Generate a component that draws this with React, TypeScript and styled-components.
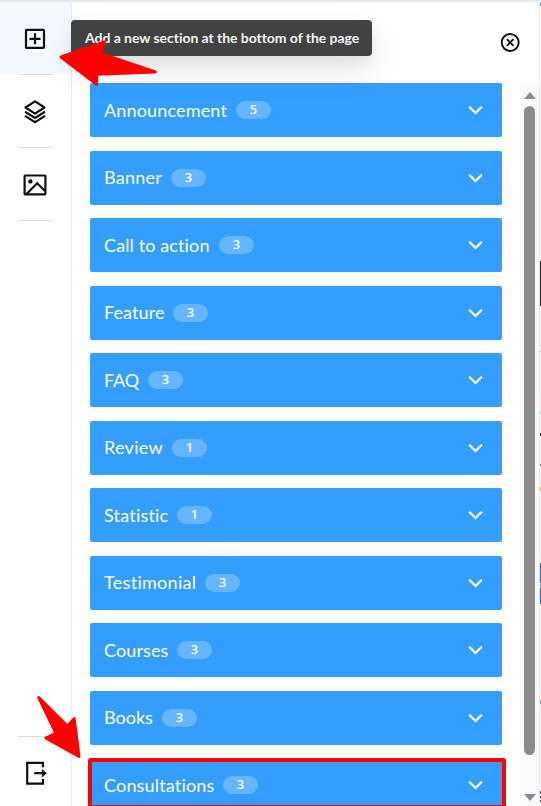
import React from 'react';
import styled, { createGlobalStyle } from 'styled-components';

const GlobalStyle = createGlobalStyle`
  *, *::before, *::after { box-sizing: border-box; }
  html, body { margin: 0; overflow: hidden; background: #fff; }
`;

const Editor = styled.div`
  position: relative;
  display: flex;
  width: 541px;
  height: 806px;
  overflow: hidden;
  background: #fff;
  font-family: Lato, "Noto Sans", sans-serif;
  font-variant-ligatures: none;
  &::before {
    content: "";
    position: absolute;
    z-index: 1;
    inset: 0 0 auto 0;
    height: 3px;
    background: linear-gradient(#e3e3e3, #ededed 50%, rgba(245, 245, 245, 0.4));
  }
`;

const Rail = styled.nav`
  display: flex;
  flex-direction: column;
  flex: none;
  width: 72px;
  border-right: 1px solid #ebebed;
`;

const RailButton = styled.button<{ $active?: boolean; $height: number }>`
  display: flex;
  align-items: center;
  justify-content: center;
  width: 71px;
  height: ${p => p.$height}px;
  padding: ${p => (p.$active ? 4 : 2)}px 1px 0 0;
  border: 0;
  background: ${p => (p.$active ? '#f3f9fe' : 'transparent')};
  svg { display: block; }
`;

const Divider = styled.div`
  flex: none;
  width: 35px;
  height: 1px;
  margin-left: 18px;
  background: #dedee0;
`;

const Spacer = styled.div`
  flex: 1;
`;

const Panel = styled.section`
  display: flex;
  flex-direction: column;
  width: 467px;
  min-width: 0;
`;

const PanelHeader = styled.header`
  display: flex;
  flex: none;
  align-items: flex-start;
  justify-content: flex-end;
  height: 83px;
  padding: 32px 19px 0 0;
  svg { display: block; }
`;

const PanelBody = styled.div`
  display: flex;
  flex: 1;
  min-height: 0;
  justify-content: space-between;
`;

const SectionList = styled.div`
  display: flex;
  flex-direction: column;
  gap: 13.5px;
  padding: 0.3px 0 0 18px;
`;

const SectionRow = styled.div<{ $marked?: boolean }>`
  position: relative;
  display: flex;
  flex: none;
  align-items: center;
  width: 412px;
  height: 54px;
  padding: 0 19px 0 14px;
  border-radius: 2px;
  background: #349eff;
  color: #fff;
  ${p => p.$marked && `
    &::after {
      content: "";
      position: absolute;
      top: -0.3px;
      left: -2px;
      width: 418px;
      height: 51px;
      border: 4px solid #fe0000;
      border-radius: 3px;
    }
  `}
`;

const Label = styled.span<{ $width: number; $spacing: number }>`
  flex: none;
  width: ${p => p.$width}px;
  padding-bottom: 1px;
  font-size: 18px;
  line-height: 24px;
  letter-spacing: ${p => p.$spacing}px;
  white-space: nowrap;
`;

const Count = styled.span`
  width: 35px;
  height: 18px;
  border-radius: 9px;
  background: #66b5ff;
  font-family: "Noto Sans", sans-serif;
  font-size: 13px;
  font-weight: 500;
  line-height: 17px;
  text-align: center;
`;

const Chevron = styled.svg`
  display: block;
  margin-left: auto;
`;

const Scrollbar = styled.div`
  display: flex;
  flex-direction: column;
  align-items: center;
  width: 19px;
  padding: 9px 0 5px;
  background: #fbfbfb;
`;

const ScrollArrow = styled.div<{ $down?: boolean }>`
  width: 0;
  height: 0;
  border-left: 6.5px solid transparent;
  border-right: 6.5px solid transparent;
  ${p => (p.$down ? 'border-top' : 'border-bottom')}: 7px solid #8b8b8b;
`;

const Thumb = styled.div`
  width: 11px;
  height: 649px;
  margin: 7px 0 auto;
  border-radius: 6px;
  background: #8b8b8b;
`;

const PageEdge = styled.div`
  display: flex;
  flex-direction: column;
  width: 2px;
  border-left: 1px solid #e9e9eb;
`;

const EdgePiece = styled.div<{ $gap: number; $height: number; $color: string }>`
  flex: none;
  height: ${p => p.$height}px;
  margin-top: ${p => p.$gap}px;
  background: ${p => p.$color};
`;

const Tooltip = styled.div`
  position: absolute;
  top: 20px;
  left: 71px;
  width: 301px;
  height: 36px;
  padding-left: 14px;
  border-radius: 4px;
  background: #424242;
  box-shadow: 0 8px 12px rgba(0, 0, 0, 0.05), 0 14px 34px rgba(0, 0, 0, 0.1);
  color: #f5f5f5;
  font-size: 14px;
  font-weight: 700;
  line-height: 35px;
  letter-spacing: -0.05px;
  white-space: nowrap;
`;

const Arrows = styled.svg`
  position: absolute;
  inset: 0;
  pointer-events: none;
`;

const sections = [
  { name: 'Announcement', count: 5, width: 132, spacing: 0.16 },
  { name: 'Banner', count: 3, width: 67, spacing: 0.23 },
  { name: 'Call to action', count: 3, width: 115, spacing: 0.12 },
  { name: 'Feature', count: 3, width: 69, spacing: 0.09 },
  { name: 'FAQ', count: 3, width: 44, spacing: -0.1 },
  { name: 'Review', count: 1, width: 68, spacing: 0.3 },
  { name: 'Statistic', count: 1, width: 73, spacing: 0.2 },
  { name: 'Testimonial', count: 3, width: 101, spacing: 0.3 },
  { name: 'Courses', count: 3, width: 73, spacing: 0.11 },
  { name: 'Books', count: 3, width: 58, spacing: 0 },
  { name: 'Consultations', count: 3, width: 119, spacing: 0.17, marked: true },
];

const edgePieces = [
  { gap: 2, height: 4, color: '#349eff' },
  { gap: 255, height: 45, color: '#20262e' },
  { gap: 45, height: 1, color: '#b5b5b5' },
  { gap: 60, height: 2, color: '#9cd6f2' },
  { gap: 19, height: 3, color: '#20202a' },
  { gap: 28, height: 2, color: '#68718a' },
  { gap: 21, height: 4, color: '#d7a46a' },
  { gap: 72, height: 20, color: '#2f62e0' },
  { gap: 1, height: 3, color: '#7fa6e0' },
  { gap: 1, height: 16, color: '#2f62e0' },
  { gap: 96, height: 4, color: '#4daaf7' },
  { gap: 87, height: 3, color: '#35557a' },
  { gap: 2, height: 2, color: '#4a5263' },
  { gap: 2, height: 2, color: '#4a5263' },
];

const ink = '#111';

const AddIcon = () => (
  <svg width="24" height="24" viewBox="0 0 24 24" fill="none" stroke={ink} strokeWidth="2.2">
    <rect x="3" y="2.8" width="18" height="18" rx=".6" />
    <path d="M12 6.3v11M6.5 11.8h11" />
  </svg>
);

const LayersIcon = () => (
  <svg width="24" height="26" viewBox="0 0 24 26" fill="none" stroke={ink} strokeWidth="2.2">
    <path d="M12 2.4 21.5 8.5 12 14.6 2.5 8.5Z" strokeLinejoin="round" />
    <path d="m2 12.7 10 6.3 10-6.3M2 16.9l10 6.3 10-6.3" />
  </svg>
);

const ImageIcon = () => (
  <svg width="24" height="24" viewBox="0 0 24 24" fill="none" stroke={ink} strokeWidth="2.2">
    <rect x="1.6" y="2.5" width="20.8" height="18.8" rx=".5" />
    <circle cx="7.4" cy="8.4" r="2.2" fill={ink} stroke="none" />
    <path d="m3.5 21 10.7-10.7L22 18" />
  </svg>
);

const ExitIcon = () => (
  <svg width="24" height="24" viewBox="0 0 24 24" fill="none" stroke={ink} strokeWidth="2.2">
    <path d="M20 6.2V1.8H4.2v20.8H20V18M11.2 12.2h9" />
    <path d="m18.8 8 5 4.2-5 4.2Z" fill={ink} stroke="none" />
  </svg>
);

const CloseIcon = () => (
  <svg width="20" height="20" viewBox="0 0 20 20" fill="none" stroke={ink} strokeWidth="1.9">
    <circle cx="10.2" cy="10.5" r="8.5" />
    <path d="m6.9 7.2 6.6 6.6M13.5 7.2l-6.6 6.6" />
  </svg>
);

export default function App() {
  return (
    <Editor>
      <GlobalStyle />
      <Rail>
        <RailButton $active $height={74} aria-label="Add section"><AddIcon /></RailButton>
        <Divider />
        <RailButton $height={72} aria-label="Layers"><LayersIcon /></RailButton>
        <Divider />
        <RailButton $height={72} aria-label="Images"><ImageIcon /></RailButton>
        <Divider />
        <Spacer />
        <Divider />
        <RailButton $height={69} aria-label="Exit"><ExitIcon /></RailButton>
      </Rail>
      <Panel>
        <PanelHeader><CloseIcon /></PanelHeader>
        <PanelBody>
          <SectionList>
            {sections.map(s => (
              <SectionRow key={s.name} $marked={s.marked}>
                <Label $width={s.width} $spacing={s.spacing}>{s.name}</Label>
                <Count>{s.count}</Count>
                <Chevron width="15" height="10" viewBox="0 0 15 10" fill="none" stroke="#fff" strokeWidth="2.3">
                  <path d="m1.2 1.8 6.3 6.2 6.3-6.2" />
                </Chevron>
              </SectionRow>
            ))}
          </SectionList>
          <Scrollbar>
            <ScrollArrow />
            <Thumb />
            <ScrollArrow $down />
          </Scrollbar>
        </PanelBody>
      </Panel>
      <PageEdge>
        {edgePieces.map((p, i) => (
          <EdgePiece key={i} $gap={p.gap} $height={p.height} $color={p.color} />
        ))}
      </PageEdge>
      <Tooltip>Add a new section at the bottom of the page</Tooltip>
      <Arrows width="541" height="806" viewBox="0 0 541 806" fill="#fe0000" stroke="#fe0000" strokeWidth="3" strokeLinejoin="round">
        <path d="M61 57 104.3 42 100.3 53.3 155.3 72 96.7 74.3 96.7 84.2Z" />
        <path d="M38.7 697.5 67.3 726 74.2 718.7 79 756.5 45.8 738 56 733.3Z" />
      </Arrows>
    </Editor>
  );
}
